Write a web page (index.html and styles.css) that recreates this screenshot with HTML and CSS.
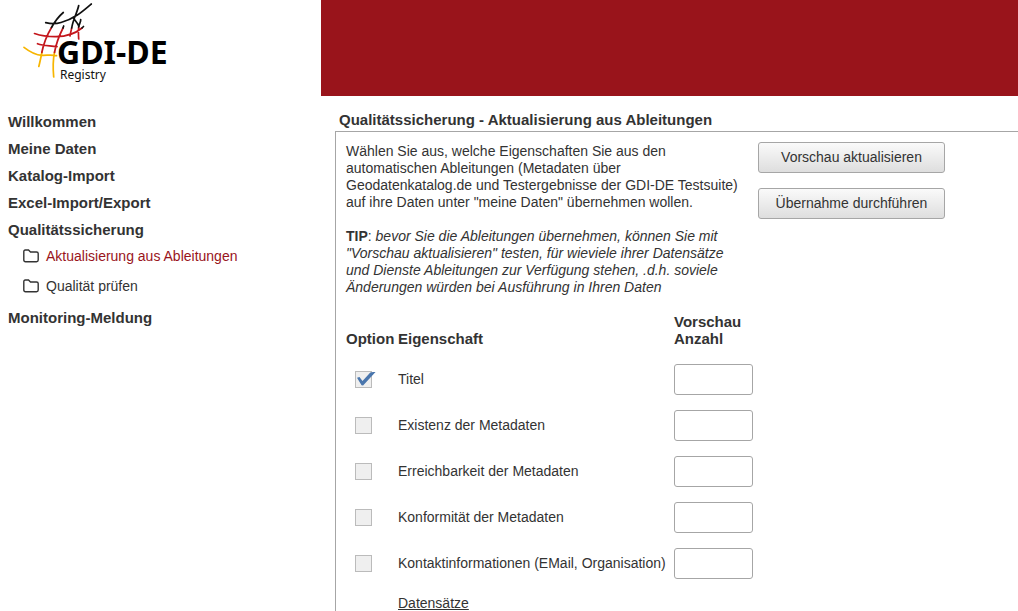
FILE: index.html
```html
<!DOCTYPE html>
<html lang="de">
<head>
    <meta charset="UTF-8">
    <meta name="viewport" content="width=device-width, initial-scale=1.0">
    <title>GDI-DE Registry</title>
    <link rel="stylesheet" href="styles.css">
</head>
<body>
    <header class="header">
        <div class="logo">
            <svg width="180" height="90" viewBox="0 0 180 90" role="img" aria-label="GDI-DE Registry">
                <g fill="none" stroke-width="1.7" stroke-linecap="round">
                    <path stroke="#f7b500" d="M24 47.300C30 52 36 55 42 55.300C47 55.500 51 54.500 56.500 55.700M42 52C41 57 40 62 38.800 66.500M54.500 52C53 60 53 70 53.700 77"/>
                    <path stroke="#c4161c" d="M51.500 27.500C47 35 43.500 44 41.800 52.500M63 28C59 36 56 44 54.500 52.500M34.500 33.500C42 36 49 36.800 56 36.700C68 36.500 76 33 82 28M37.500 43.700C44 46 50 45.500 57 46.700M71.700 28C71 31 70.500 33 70 36M78.700 27C78 31 78.500 35 78.700 39"/>
                    <path stroke="#111" d="M63.300 12.500C58 17 54.500 22 51.500 27.500M45.700 22.700C51 24 56 24 61 22.500C74 19 82 12 91.300 4M78.700 5.500C77.500 12 73 19 71.700 28M63.700 26L63 28M73.500 18C75 21 77.500 22.500 79 26.500M80.700 19.500C81 22 79 24 78.700 27M82 28L83.500 26.500"/>
                </g>
                <text class="logo-name" x="57" y="64">GDI-DE</text>
                <text class="logo-sub" x="60" y="79">Registry</text>
            </svg>
        </div>
        <div class="banner"></div>
    </header>

    <div class="page">
        <nav class="sidebar">
            <ul class="menu">
                <li><a href="#">Willkommen</a></li>
                <li><a href="#">Meine Daten</a></li>
                <li><a href="#">Katalog-Import</a></li>
                <li><a href="#">Excel-Import/Export</a></li>
                <li>
                    <a href="#">Qualitätssicherung</a>
                    <ul class="submenu">
                        <li>
                            <a href="#" class="active">
                                <svg class="folder" viewBox="0 0 16 14"><path d="M.8 11V2.500Q.8 1 2.300 1H5.500L7.500 3H13.500Q15.200 3 15.200 4.500V11Q15.200 12.700 13.500 12.700H2.500Q.8 12.700.8 11Z"/></svg>
                                Aktualisierung aus Ableitungen
                            </a>
                        </li>
                        <li>
                            <a href="#">
                                <svg class="folder" viewBox="0 0 16 14"><path d="M.8 11V2.500Q.8 1 2.300 1H5.500L7.500 3H13.500Q15.200 3 15.200 4.500V11Q15.200 12.700 13.500 12.700H2.500Q.8 12.700.8 11Z"/></svg>
                                Qualität prüfen
                            </a>
                        </li>
                    </ul>
                </li>
                <li><a href="#">Monitoring-Meldung</a></li>
            </ul>
        </nav>

        <main class="content">
            <h1>Qualitätssicherung - Aktualisierung aus Ableitungen</h1>
            <form class="panel">
                <div class="intro">
                    <div class="intro-text">
                        <p>Wählen Sie aus, welche Eigenschaften Sie aus den automatischen Ableitungen (Metadaten über Geodatenkatalog.de und Testergebnisse der GDI-DE Testsuite) auf ihre Daten unter "meine Daten" übernehmen wollen.</p>
                        <p><b>TIP</b>: <i>bevor Sie die Ableitungen übernehmen, können Sie mit "Vorschau aktualisieren" testen, für wieviele ihrer Datensätze und Dienste Ableitungen zur Verfügung stehen, .d.h. soviele Änderungen würden bei Ausführung in Ihren Daten</i></p>
                    </div>
                    <div class="actions">
                        <button type="button">Vorschau aktualisieren</button>
                        <button type="button">Übernahme durchführen</button>
                    </div>
                </div>

                <table class="options">
                    <thead>
                        <tr>
                            <th class="col-option">Option</th>
                            <th class="col-name">Eigenschaft</th>
                            <th class="col-count">Vorschau Anzahl</th>
                        </tr>
                    </thead>
                    <tbody>
                        <tr>
                            <td><input type="checkbox" id="titel" checked></td>
                            <td><label for="titel">Titel</label></td>
                            <td><input type="text" aria-label="Anzahl Titel"></td>
                        </tr>
                        <tr>
                            <td><input type="checkbox" id="existenz"></td>
                            <td><label for="existenz">Existenz der Metadaten</label></td>
                            <td><input type="text" aria-label="Anzahl Existenz der Metadaten"></td>
                        </tr>
                        <tr>
                            <td><input type="checkbox" id="erreichbarkeit"></td>
                            <td><label for="erreichbarkeit">Erreichbarkeit der Metadaten</label></td>
                            <td><input type="text" aria-label="Anzahl Erreichbarkeit der Metadaten"></td>
                        </tr>
                        <tr>
                            <td><input type="checkbox" id="konformitaet"></td>
                            <td><label for="konformitaet">Konformität der Metadaten</label></td>
                            <td><input type="text" aria-label="Anzahl Konformität der Metadaten"></td>
                        </tr>
                        <tr>
                            <td><input type="checkbox" id="kontakt"></td>
                            <td><label for="kontakt">Kontaktinformationen (EMail, Organisation)</label></td>
                            <td><input type="text" aria-label="Anzahl Kontaktinformationen"></td>
                        </tr>
                        <tr class="group">
                            <td></td>
                            <td>Datensätze</td>
                            <td></td>
                        </tr>
                    </tbody>
                </table>
            </form>
        </main>
    </div>
</body>
</html>
```

FILE: styles.css
```css
* { box-sizing: border-box; margin: 0; padding: 0; }
body {
    display: flex;
    flex-direction: column;
    min-height: 100vh;
    background: #fff;
    color: #333;
    font-family: "Liberation Sans", Arial, sans-serif;
    font-size: 14px;
    line-height: 17px;
}
a { color: inherit; text-decoration: none; }
ul { list-style: none; }

/* header */
.header {
    display: flex;
    height: 96px;
}
.logo { width: 321px; }
.logo svg { display: block; }
.logo-name {
    fill: #000;
    font: bold 32px "Noto Sans", sans-serif;
}
.logo-sub {
    fill: #111;
    font: 12px "Noto Sans", sans-serif;
}
.banner {
    flex: 1;
    background: #99141b;
}

.page {
    display: flex;
    flex: 1;
}

/* navigation */
.sidebar {
    width: 335px;
    padding: 17px 8px;
}
.menu > li {
    margin-bottom: 10px;
    font-size: 15px;
    font-weight: bold;
}
.menu > li > a { display: block; }
.submenu {
    display: flex;
    flex-direction: column;
    gap: 4px;
    padding: 5px 0 0 15px;
    font-size: 14px;
    font-weight: normal;
}
.submenu a {
    display: flex;
    align-items: center;
    gap: 7px;
    height: 26px;
}
.submenu .active { color: #99141b; }
.folder {
    width: 16px;
    height: 14px;
    fill: none;
    stroke: #333;
    stroke-width: 1.4;
}

/* content */
.content {
    display: flex;
    flex: 1;
    flex-direction: column;
}
.content h1 {
    padding: 15px 4px 3px;
    font-size: 15px;
}
.panel {
    flex: 1;
    padding: 10px 10px 0;
    border: 1px solid #a6a6a6;
    border-width: 1px 0 0 1px;
}
.intro {
    display: flex;
    gap: 12px;
}
.intro-text {
    width: 400px;
    padding-top: 1px;
}
.intro-text p { margin-bottom: 17px; }
.actions {
    display: flex;
    flex-direction: column;
    gap: 15px;
}
button {
    width: 187px;
    height: 31px;
    border: 1px solid #a6a6a6;
    border-radius: 3px;
    background: linear-gradient(#fafafa, #dedede);
    color: #333;
    font: inherit;
    cursor: pointer;
}

/* options table */
.options {
    border-collapse: collapse;
    table-layout: fixed;
}
.options th {
    height: 43px;
    padding-bottom: 9px;
    font-size: 15px;
    text-align: left;
    vertical-align: bottom;
}
.col-option { width: 52px; }
.col-name { width: 276px; }
.col-count { width: 79px; }
.options td { height: 46px; }
.options .group td {
    height: 35px;
    text-decoration: underline;
}
input[type="text"] {
    display: block;
    width: 79px;
    height: 31px;
    padding: 0 6px;
    border: 1px solid #a6a6a6;
    border-radius: 3px;
    font: inherit;
}
input[type="checkbox"] {
    display: block;
    position: relative;
    width: 17px;
    height: 17px;
    margin-left: 9px;
    border: 1px solid #bbb;
    background: #efefef;
    appearance: none;
}
input[type="checkbox"]:checked::after {
    content: "";
    position: absolute;
    top: 0;
    left: 1px;
    width: 19px;
    height: 14px;
    background: #4a76ad;
    clip-path: polygon(0 45%, 13% 40%, 29% 68%, 70% 8%, 100% 0, 32% 100%, 24% 98%);
}
```
